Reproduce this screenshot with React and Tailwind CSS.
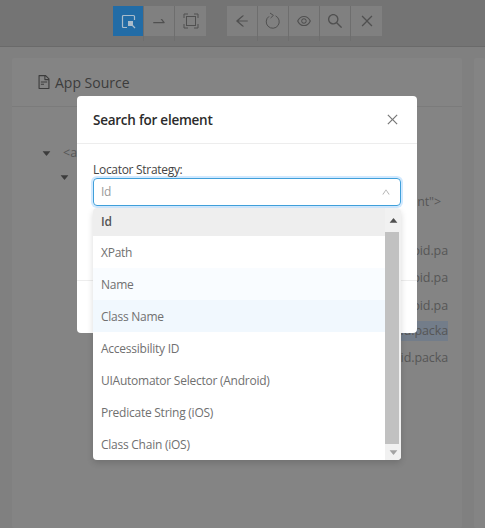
import {
  AiOutlineArrowLeft,
  AiOutlineClose,
  AiOutlineEye,
  AiOutlineFileText,
  AiOutlineSearch,
  AiOutlineSwapRight,
  AiOutlineUp,
  AiFillCaretDown,
  AiFillCaretUp,
} from "react-icons/ai";

const options = [
  "Id",
  "XPath",
  "Name",
  "Class Name",
  "Accessibility ID",
  "UIAutomator Selector (Android)",
  "Predicate String (iOS)",
  "Class Chain (iOS)",
];

const optionBg = {
  Id: "bg-[#eeeeee] font-semibold text-[#555555] h-[28px]",
  Name: "bg-[#f9fcff] text-[#707070] h-[32px] pt-[2px]",
  "Class Name": "bg-[#f1f8fe] text-[#707070] h-[32px] pt-[2px]",
};

function ToolButton({ children, active }) {
  return (
    <div className="h-[35px] w-[31px] border-r border-[#6e6e6e] last:border-r-0">
      <div
        className={`flex h-[30px] items-center justify-center text-[16px] ${
          active ? "bg-[#226ca6] text-[#a9bccb]" : "bg-[#808080] text-[#505050]"
        }`}
      >
        {children}
      </div>
    </div>
  );
}

function SelectIcon() {
  return (
    <svg width="15" height="15" viewBox="0 0 15 15" fill="none">
      <path d="M6 13.5H2.5a1 1 0 0 1-1-1v-10a1 1 0 0 1 1-1h10a1 1 0 0 1 1 1V6" stroke="currentColor" strokeWidth="1.2" />
      <rect x="7" y="7" width="5" height="5" fill="currentColor" />
      <path d="M11 11l3 3" stroke="currentColor" strokeWidth="1.2" />
    </svg>
  );
}

function ScanIcon() {
  return (
    <svg width="16" height="16" viewBox="0 0 16 16" fill="none" stroke="currentColor" strokeWidth="1">
      <path d="M1 5V1h4M11 1h4v4M15 11v4h-4M5 15H1v-4" />
      <rect x="3.5" y="3.5" width="9" height="9" />
    </svg>
  );
}

function ReloadIcon() {
  return (
    <svg width="16" height="18" viewBox="0 0 16 18" fill="none" stroke="currentColor" strokeWidth="1">
      <path d="M10.6 3.9A6.5 6.5 0 1 1 4 4.4" />
      <path d="M5 1l3.4 2.4-2.8 2.6" />
    </svg>
  );
}

function TreeRow({ text, className = "" }) {
  return (
    <div className={`ml-[100px] flex h-[20px] items-center justify-end overflow-hidden whitespace-nowrap text-[12.5px] tracking-[-0.1px] text-[#565656] ${className}`}>
      {text}
    </div>
  );
}

export default function App() {
  return (
    <div className="relative h-[528px] w-[485px] overflow-hidden bg-[#808080] font-['Open_Sans',sans-serif]">
      <div className="flex h-[47px] justify-center gap-[21px] overflow-hidden border-b border-[#6a6a6a] bg-[#747474] pt-[6px] pl-[10px]">
        <div className="flex">
          <ToolButton active><SelectIcon /></ToolButton>
          <ToolButton><AiOutlineSwapRight /></ToolButton>
          <ToolButton><ScanIcon /></ToolButton>
        </div>
        <div className="flex">
          <ToolButton><AiOutlineArrowLeft /></ToolButton>
          <ToolButton><ReloadIcon /></ToolButton>
          <ToolButton><AiOutlineEye /></ToolButton>
          <ToolButton><AiOutlineSearch className="text-[18px]" /></ToolButton>
          <ToolButton><AiOutlineClose /></ToolButton>
        </div>
      </div>

      <div className="flex gap-[12px] pt-[11px] pl-[12px]">
        <div className="h-[470px] w-[450px] shrink-0 rounded-[2px] bg-[#848484]">
          <div className="flex h-[49px] items-center gap-[3px] border-b border-[#7b7b7b] pl-[24px] text-[14px] text-[#3c3c3c]">
            <AiOutlineFileText className="text-[16px]" />
            <span>App Source</span>
          </div>
          <div className="h-[420px] pr-[14px] pt-[36px]">
            <div className="flex h-[20px] items-center pl-[29px] text-[12.5px] text-[#565656]">
              <AiFillCaretDown className="mr-[11px] text-[11px] text-[#3c3c3c]" />
              <span>&lt;android.widget.FrameLayout&gt;</span>
            </div>
            <div className="mt-[4px] flex h-[20px] items-center pl-[47px] text-[#3c3c3c]">
              <AiFillCaretDown className="text-[11px]" />
            </div>
            <TreeRow text='resource-id="android:id/content">' className="mt-[5px] pr-[7px]" />
            <TreeRow text='class="android.pa' className="mt-[29px]" />
            <TreeRow text='class="android.pa' className="mt-[7px]" />
            <TreeRow text='class="android.pa' className="mt-[8px]" />
            <TreeRow text='class="android.packa' className="mt-[5px] bg-[#737d8a]" />
            <TreeRow text='class="android.packa' className="mt-[7px]" />
          </div>
        </div>
        <div className="h-[470px] flex-1 rounded-[2px] bg-[#848484]" />
      </div>

      <div className="absolute top-[96px] left-[77px] h-[237px] w-[340px] rounded-[4px] bg-white">
        <div className="flex h-[48px] items-center justify-between border-b border-[#ededed] pr-[17px] pl-[16px]">
          <span className="pt-[2px] text-[13.5px] font-semibold tracking-[-0.25px] text-[#2b2b2b]">Search for element</span>
          <AiOutlineClose className="text-[15px] text-[#777777]" />
        </div>
        <div className="px-[16px] pt-[18px]">
          <div className="h-[16px] text-[12px] leading-[16px] tracking-[-0.3px] text-[#444444]">Locator Strategy:</div>
          <div className="flex h-[28px] items-center justify-between rounded-[4px] border border-[#40a0da] pr-[9px] pl-[7px] text-[12px] tracking-[-0.25px] text-[#9a9a9a] shadow-[0_0_0_2px_rgba(24,144,255,0.2)]">
            <span>Id</span>
            <AiOutlineUp className="text-[10px] text-[#a8a8a8]" />
          </div>
        </div>
        <div className="mt-[74px] border-t border-[#ededed]" />
      </div>

      <div className="absolute top-[208px] left-[93px] flex h-[252px] w-[308px] overflow-hidden rounded-[4px] bg-white shadow-[0_3px_6px_rgba(0,0,0,0.15)]">
        <div className="flex-1">
          {options.map((o) => (
            <div
              key={o}
              className={`flex items-center pl-[8px] text-[12px] tracking-[-0.25px] ${optionBg[o] || "h-[32px] pt-[2px] text-[#707070]"}`}
            >
              {o}
            </div>
          ))}
        </div>
        <div className="flex w-[16px] flex-col bg-[#f1f1f1]">
          <div className="flex h-[24px] items-center justify-center text-[11px] text-[#505050]">
            <AiFillCaretUp />
          </div>
          <div className="h-[212px] w-[14px] bg-[#c1c1c1]" />
          <div className="flex h-[16px] items-center justify-center text-[11px] text-[#a3a3a3]">
            <AiFillCaretDown />
          </div>
        </div>
      </div>
    </div>
  );
}
